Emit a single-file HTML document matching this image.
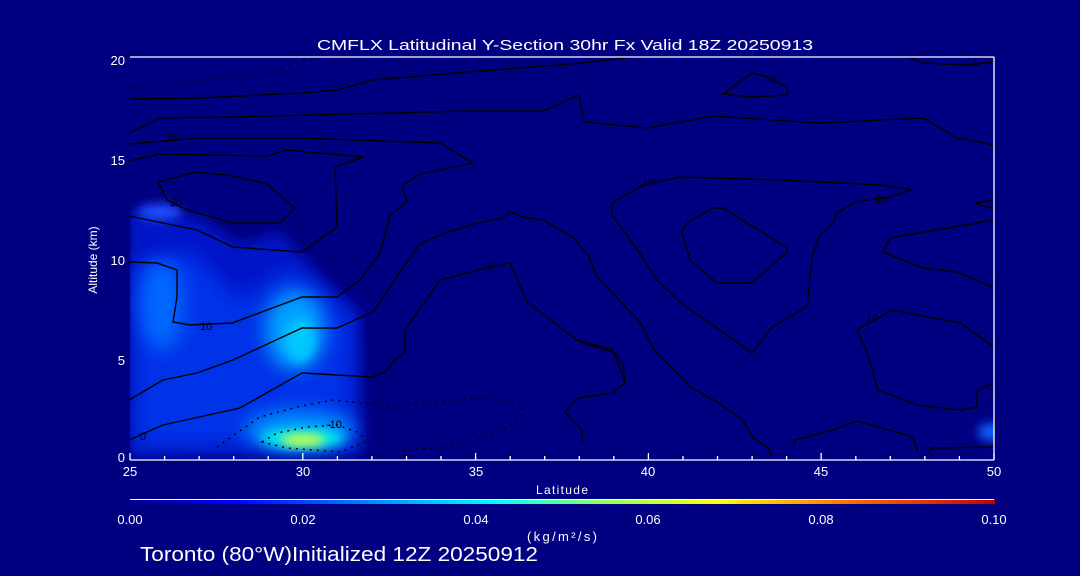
<!DOCTYPE html>
<html><head><meta charset="utf-8"><style>
html,body{margin:0;padding:0;background:#000080;}
svg{display:block}
text{font-family:"Liberation Sans",sans-serif;fill:#fff}
</style></head><body>
<svg width="1080" height="576" viewBox="0 0 1080 576" xmlns="http://www.w3.org/2000/svg">
<defs>
<filter id="b" x="-50%" y="-50%" width="200%" height="200%"><feGaussianBlur stdDeviation="9"/></filter>
<filter id="b2" x="-50%" y="-50%" width="200%" height="200%"><feGaussianBlur stdDeviation="5"/></filter>
<filter id="b3" x="-50%" y="-50%" width="200%" height="200%"><feGaussianBlur stdDeviation="7"/></filter>
<linearGradient id="cb" x1="0" x2="1" y1="0" y2="0">
<stop offset="0" stop-color="#000090"/><stop offset="0.12" stop-color="#0000ff"/><stop offset="0.42" stop-color="#00ffff"/><stop offset="0.55" stop-color="#90ff60"/><stop offset="0.68" stop-color="#ffff00"/><stop offset="0.83" stop-color="#ff7000"/><stop offset="1" stop-color="#c00000"/>
</linearGradient>
<clipPath id="pc"><rect x="130" y="57" width="864" height="403"/></clipPath>
</defs>
<rect width="1080" height="576" fill="#000080"/>
<g clip-path="url(#pc)">
<polygon points="128,210 200,218 240,245 280,232 300,255 340,295 360,310 362,455 128,458" fill="#0018c8" filter="url(#b3)"/>
<polygon points="135,262 190,252 240,300 290,268 330,298 350,320 350,445 135,445" fill="#0030e8" filter="url(#b)"/>
<ellipse cx="162" cy="305" rx="22" ry="45" fill="#0068ff" filter="url(#b)"/>
<ellipse cx="295" cy="330" rx="30" ry="40" fill="#00a0ff" filter="url(#b)"/>
<ellipse cx="300" cy="340" rx="15" ry="22" fill="#00c8ff" filter="url(#b2)"/>
<ellipse cx="300" cy="430" rx="55" ry="20" fill="#0090ff" filter="url(#b)"/>
<ellipse cx="302" cy="438" rx="42" ry="10" fill="#00e8e8" filter="url(#b2)"/>
<ellipse cx="303" cy="440" rx="22" ry="6" fill="#d8ff40" filter="url(#b2)"/>
<ellipse cx="160" cy="212" rx="22" ry="8" fill="#2050ff" filter="url(#b2)"/>
<ellipse cx="992" cy="432" rx="14" ry="9" fill="#1060ff" filter="url(#b2)"/>
</g>
<g fill="none" stroke="#000" stroke-width="1.4">
<polyline points="130,99 200,98 300,93 337,90 373,80 467,72 583,63 633,57"/>
<polyline points="130,87 200,80 260,75 313,58" stroke-dasharray="2,6"/>
<polyline points="129,133 160,118 233,117 467,111 543,111 579,95 584,122 647,128 713,116 820,123 923,118 957,138 994,145"/>
<polyline points="129,262 157,263 177,270 177,297 173,322 190,325 232,323 302,297 337,297 360,280 380,253 390,215 407,202 402,186 420,174 473,163 440,143 300,138 200,138 129,144"/>
<polyline points="129,216 197,230 233,247 302,252 337,227 335,167 363,157 287,150 267,156 160,154 129,161"/>
<polygon points="158,182 197,172 233,176 267,184 295,208 280,223 233,223 187,210 167,200"/>
<polyline points="129,400 163,380 197,373 233,360 302,328 337,328 373,312 400,272 420,244 440,235 477,223 503,218 510,212 527,218 543,220 573,237 588,255 597,277 640,322 653,348 690,387 717,402 743,420 753,438 768,448 772,456"/>
<polyline points="129,440 163,425 240,408 302,373 372,377 385,372 395,360 405,352 405,330 440,280 490,267 510,263 527,302 577,340 613,350 625,383 613,393 578,398 565,412 582,430 582,443"/>
<polygon points="612,203 612,215 632,242 657,280 683,305 720,330 752,353 772,327 807,307 812,257 820,235 833,223 837,213 855,202 890,197 912,190 880,185 780,180 680,177 643,185"/>
<polygon points="682,232 688,222 713,208 723,208 750,225 762,232 787,248 787,252 752,283 717,283 690,260"/>
<polygon points="723,94 752,73 767,77 787,87 788,95 752,97"/>
<polyline points="910,58 923,63 967,65 994,62"/>
<polyline points="994,200 975,203 994,209"/>
<polyline points="994,220 947,228 890,238 883,252 923,268 957,272 994,288"/>
<polyline points="994,347 960,323 892,310 857,330 867,352 878,390 917,405 960,410 977,407 977,390 994,383"/>
<polyline points="994,447 932,448 928,453"/>
<polyline points="793,448 795,440 833,430 857,421 913,437 918,452"/>
<polyline points="580,342 613,352 623,365 625,383"/>
<polyline points="217,447 260,417 297,407 333,400 400,407 420,403 477,398 517,402 523,405 520,417 507,428 473,442 440,448 403,450 405,458" stroke-dasharray="2,5"/>
<polygon points="262,442 277,433 307,427 337,425 360,433 365,442 340,452 287,448" stroke-dasharray="2,5"/>
</g>
<g font-size="11" style="fill:#000">
<text x="200" y="330" style="fill:#000">10</text>
<text x="165" y="141" style="fill:#000">10</text>
<text x="170" y="206" style="fill:#000">20</text>
<text x="140" y="440" style="fill:#000">0</text>
<text x="488" y="270" style="fill:#000">0</text>
<text x="642" y="186" style="fill:#000">10</text>
<text x="875" y="203" style="fill:#000">10</text>
<text x="866" y="322" style="fill:#000">10</text>
<text x="326" y="428" style="fill:#000">-10</text>
<text x="770" y="83" style="fill:#000">0</text>
<text x="974" y="66" style="fill:#000">0</text>
</g>
<g stroke="#fff" stroke-width="1.3" fill="none">
<line x1="130" y1="57" x2="994" y2="57"/>
<line x1="994" y1="57" x2="994" y2="460"/>
<line x1="130" y1="460" x2="994" y2="460"/>
<path d="M130 460v-7M164.6 460v-4M199.1 460v-4M233.7 460v-4M268.2 460v-4M302.8 460v-7M337.4 460v-4M371.9 460v-4M406.5 460v-4M441 460v-4M475.6 460v-7M510.2 460v-4M544.7 460v-4M579.3 460v-4M613.8 460v-4M648.4 460v-7M683 460v-4M717.5 460v-4M752.1 460v-4M786.6 460v-4M821.2 460v-7M855.8 460v-4M890.3 460v-4M924.9 460v-4M959.4 460v-4M994 460v-7"/>
</g>
<g font-size="13">
<text x="130" y="476" text-anchor="middle">25</text>
<text x="303" y="476" text-anchor="middle">30</text>
<text x="476" y="476" text-anchor="middle">35</text>
<text x="648" y="476" text-anchor="middle">40</text>
<text x="821" y="476" text-anchor="middle">45</text>
<text x="994" y="476" text-anchor="middle">50</text>
<text x="125" y="65" text-anchor="end">20</text>
<text x="125" y="165" text-anchor="end">15</text>
<text x="125" y="265" text-anchor="end">10</text>
<text x="125" y="365" text-anchor="end">5</text>
<text x="125" y="462" text-anchor="end">0</text>
<text x="536" y="494" font-size="12" textLength="52">Latitude</text>
<text transform="translate(97,260) rotate(-90)" text-anchor="middle" font-size="12">Altitude (km)</text>
<text x="317" y="50" font-size="15" textLength="496" lengthAdjust="spacingAndGlyphs">CMFLX Latitudinal Y-Section 30hr  Fx Valid 18Z 20250913</text>
</g>
<line x1="130" y1="499.5" x2="994" y2="499.5" stroke="#fff" stroke-width="1"/>
<rect x="130" y="500" width="865" height="4" fill="url(#cb)"/>
<g font-size="13">
<text x="130" y="524" text-anchor="middle">0.00</text>
<text x="303" y="524" text-anchor="middle">0.02</text>
<text x="476" y="524" text-anchor="middle">0.04</text>
<text x="648" y="524" text-anchor="middle">0.06</text>
<text x="821" y="524" text-anchor="middle">0.08</text>
<text x="994" y="524" text-anchor="middle">0.10</text>
<text x="527" y="541" textLength="70">(kg/m²/s)</text>
</g>
<text x="140" y="561" font-size="20" textLength="398" lengthAdjust="spacingAndGlyphs">Toronto (80°W)Initialized 12Z 20250912</text>
</svg>
</body></html>
